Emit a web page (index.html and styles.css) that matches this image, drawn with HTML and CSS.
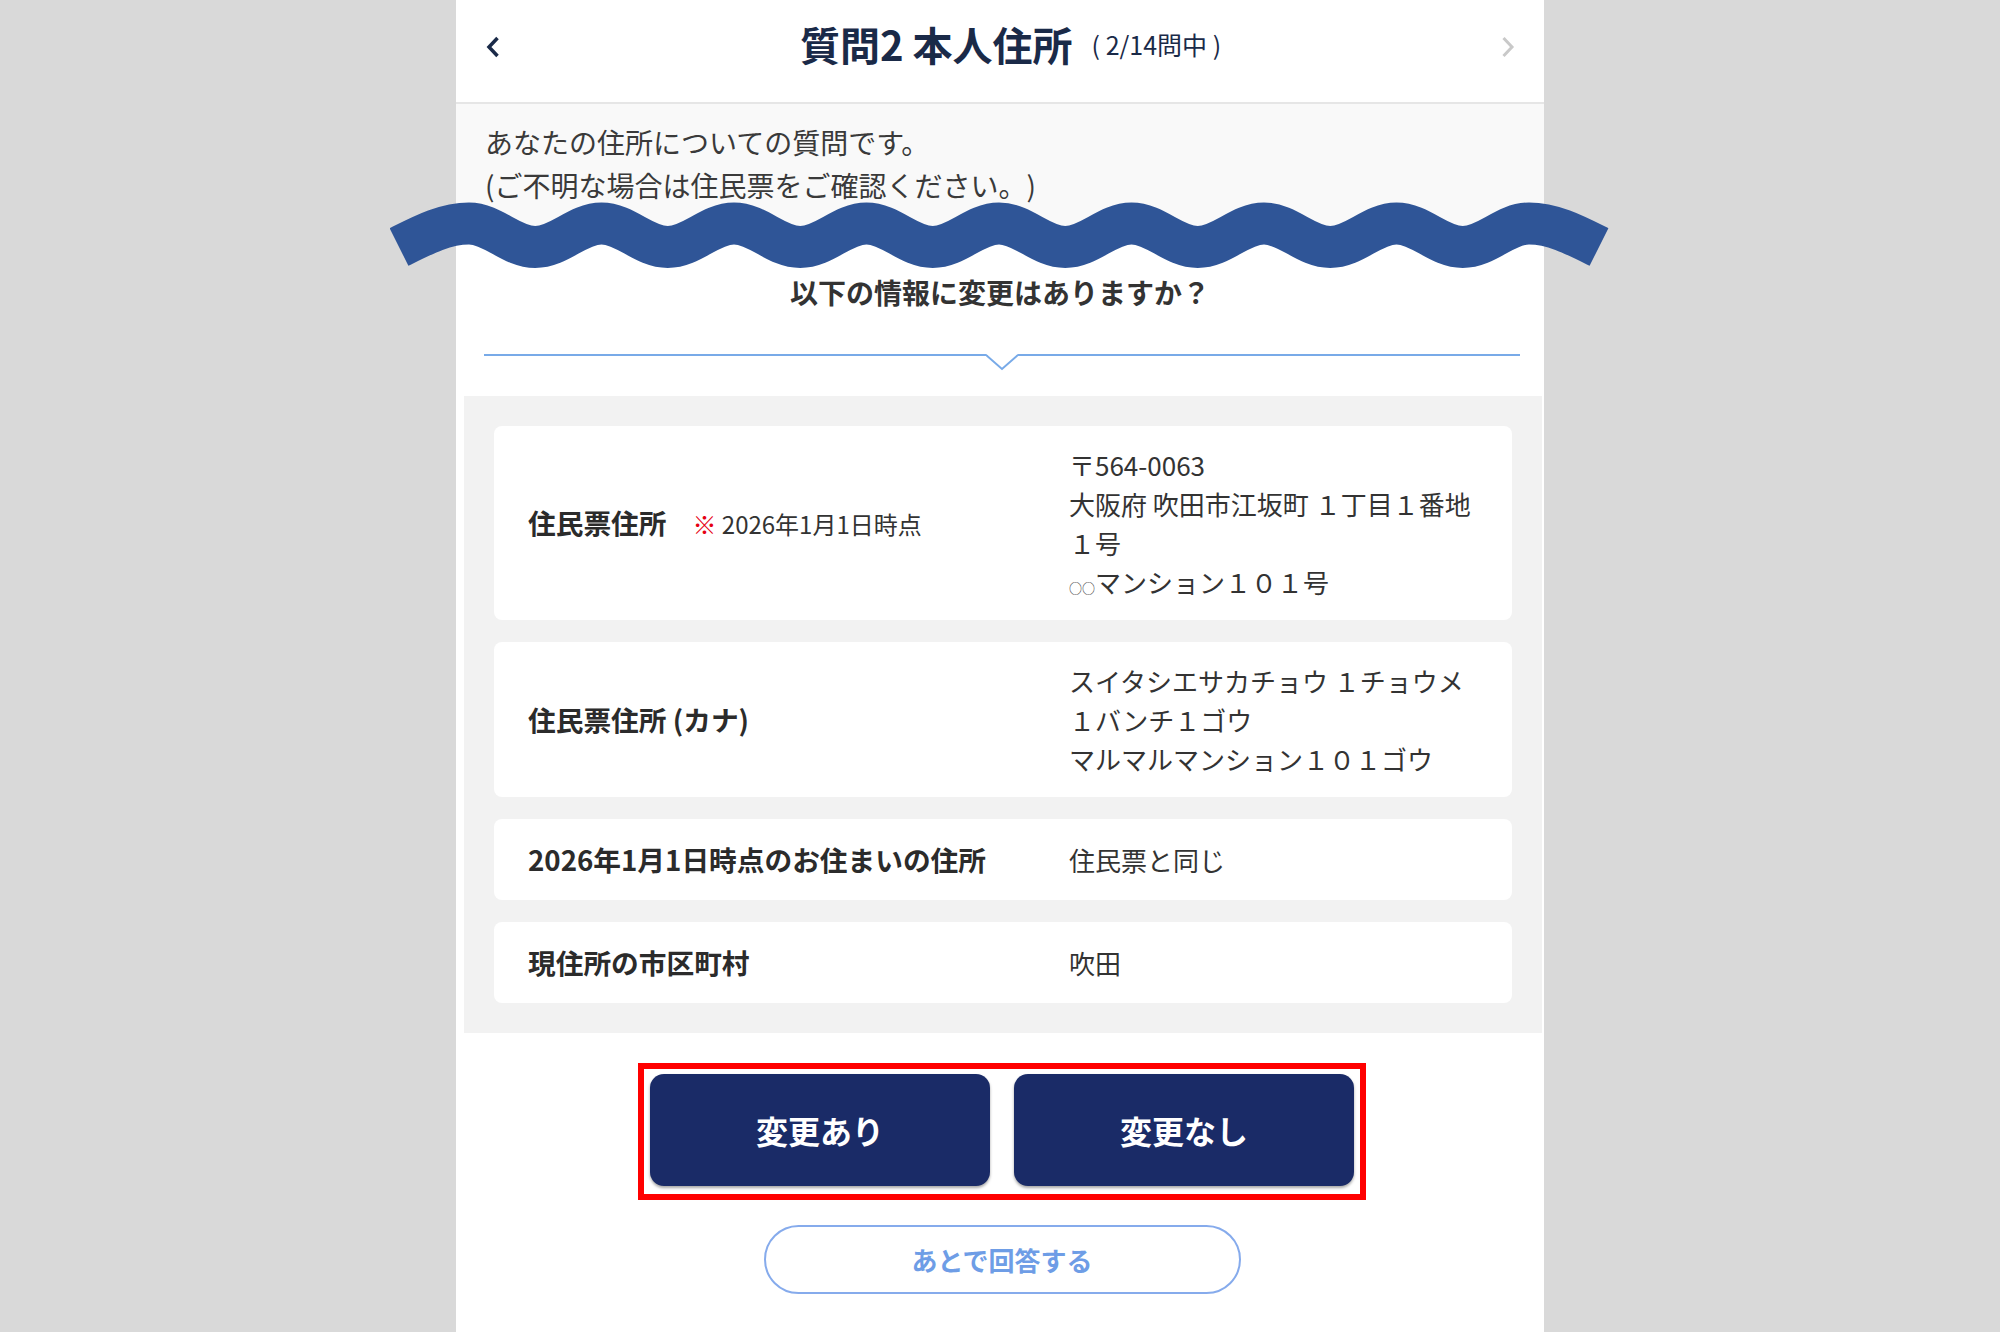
FILE: index.html
```html
<!DOCTYPE html>
<html lang="ja">
<head>
<meta charset="utf-8">
<title>質問2 本人住所</title>
<link rel="stylesheet" href="styles.css">
</head>
<body>
<div class="panel">
  <header class="header">
    <span class="nav">
      <svg width="14" height="22" viewBox="0 0 14 22"><polyline points="11.5,2 3,11 11.5,20" fill="none" stroke="#1a2a48" stroke-width="3.5"/></svg>
    </span>
    <h1 class="title">質問2 本人住所<span class="count">( 2/14問中 )</span></h1>
    <span class="nav">
      <svg width="14" height="22" viewBox="0 0 14 22"><polyline points="2.5,2 11,11 2.5,20" fill="none" stroke="#c9c9c9" stroke-width="3"/></svg>
    </span>
  </header>

  <section class="intro">
    <p class="intro-text">あなたの住所についての質問です。<br>(ご不明な場合は住民票をご確認ください。)</p>
  </section>

  <svg class="wave" width="1220" height="80" viewBox="390 195 1220 80">
    <path d="M399 247 C423 235 445 223.5 469 223.5 S511.15 247 535.25 247 S577.4 223.5 601.5 223.5 S643.65 247 667.75 247 S709.9 223.5 734 223.5 S776.15 247 800.25 247 S842.4 223.5 866.5 223.5 S908.65 247 932.75 247 S974.9 223.5 999 223.5 S1041.15 247 1065.25 247 S1107.4 223.5 1131.5 223.5 S1173.65 247 1197.75 247 S1239.9 223.5 1264 223.5 S1306.15 247 1330.25 247 S1372.4 223.5 1396.5 223.5 S1438.65 247 1462.75 247 S1504.9 223.5 1529 223.5 C1553 223.5 1575 235 1599 247" fill="none" stroke="#2f5597" stroke-width="42"/>
  </svg>

  <section class="question">
    <p class="q-text">以下の情報に変更はありますか？</p>
    <div class="divider">
      <svg class="notch" width="32" height="18" viewBox="0 0 32 18"><polygon points="0,0 16,15 32,0" fill="#fff"/><polyline points="0,1 16,15 32,1" fill="none" stroke="#78aae8" stroke-width="2"/></svg>
    </div>
  </section>

  <section class="info">
    <div class="card">
      <div class="label">住民票住所<span class="note"><span class="mark">※</span> 2026年1月1日時点</span></div>
      <div class="value">〒564-0063<br>大阪府 吹田市江坂町 １丁目１番地１号<br><span class="oo">○○</span>マンション１０１号</div>
    </div>
    <div class="card">
      <div class="label">住民票住所 (カナ)</div>
      <div class="value">スイタシエサカチョウ １チョウメ１バンチ１ゴウ<br>マルマルマンション１０１ゴウ</div>
    </div>
    <div class="card">
      <div class="label">2026年1月1日時点のお住まいの住所</div>
      <div class="value">住民票と同じ</div>
    </div>
    <div class="card">
      <div class="label">現住所の市区町村</div>
      <div class="value">吹田</div>
    </div>
  </section>

  <div class="actions">
    <div class="highlight">
      <button class="btn">変更あり</button>
      <button class="btn">変更なし</button>
    </div>
    <button class="btn-later">あとで回答する</button>
  </div>
</div>
</body>
</html>
```

FILE: styles.css
```css
html, body {
  margin: 0;
  padding: 0;
}

body {
  background: #d9d9d9;
  font-family: "Noto Sans CJK JP", "Noto Sans", sans-serif;
  color: #333;
  text-spacing-trim: space-all;
}

.panel {
  position: relative;
  width: 1088px;
  min-height: 1332px;
  margin: 0 auto;
  background: #fff;
}

.header {
  box-sizing: border-box;
  height: 104px;
  padding: 0 29px 14px 30px;
  border-bottom: 2px solid #e6e6e6;
  display: flex;
  align-items: center;
  justify-content: space-between;
  background: #fff;
}

.nav {
  display: flex;
  width: 14px;
  margin-top: 6px;
}

.title {
  margin: 0 0 0 20px;
  display: flex;
  align-items: center;
  font-size: 40px;
  font-weight: 700;
  line-height: 1;
  color: #1a2a48;
}

.count {
  margin-left: 19px;
  font-size: 25px;
  font-weight: 400;
}

.intro {
  background: #f9f9f9;
  padding: 17px 29px 28px;
}

.intro-text {
  margin: 0;
  font-size: 28px;
  line-height: 43px;
  color: #3a3a3a;
}

.wave {
  position: absolute;
  left: -66px;
  top: 195px;
  pointer-events: none;
}

.question {
  padding-top: 36px;
}

.q-text {
  margin: 0 0 40px;
  text-align: center;
  font-size: 28px;
  font-weight: 700;
  line-height: 43px;
  color: #333;
}

.divider {
  position: relative;
  height: 2px;
  margin: 0 24px 0 28px;
  background: #78aae8;
}

.notch {
  position: absolute;
  left: 50%;
  top: 0;
  margin-left: -16px;
}

.info {
  margin: 40px 2px 0 8px;
  padding: 30px;
  background: #f2f2f2;
  display: flex;
  flex-direction: column;
  gap: 22px;
}

.card {
  display: grid;
  grid-template-columns: 541px 1fr;
  align-items: center;
  padding: 19px 30px 19px 34px;
  background: #fff;
  border-radius: 8px;
}

.label {
  font-size: 27.7px;
  font-weight: 700;
  line-height: 43px;
  color: #2b2b2b;
}

.note {
  margin-left: 26px;
  font-size: 24px;
  font-weight: 400;
  color: #333;
}

.mark {
  color: #e60012;
}

.value {
  font-size: 26px;
  line-height: 39px;
  color: #333;
}

.oo {
  font-size: 13px;
  line-height: 0;
}

.actions {
  display: flex;
  flex-direction: column;
  align-items: center;
  padding: 30px 0 0 4px;
}

.highlight {
  display: flex;
  gap: 24px;
  padding: 5px 6px 8px;
  border: 6px solid #ff0000;
}

.btn {
  width: 340px;
  height: 112px;
  border: none;
  border-radius: 14px;
  background: #1a2b67;
  color: #fff;
  font-family: "Noto Sans CJK JP", sans-serif;
  font-size: 32px;
  font-weight: 700;
  box-shadow: 0 2px 3px rgba(0, 0, 0, 0.35);
}

.btn-later {
  margin-top: 25px;
  width: 477px;
  height: 69px;
  border: 2px solid #86abec;
  border-radius: 35px;
  background: #fff;
  color: #6e9de6;
  font-family: "Noto Sans CJK JP", sans-serif;
  font-size: 26px;
  font-weight: 700;
}
```
